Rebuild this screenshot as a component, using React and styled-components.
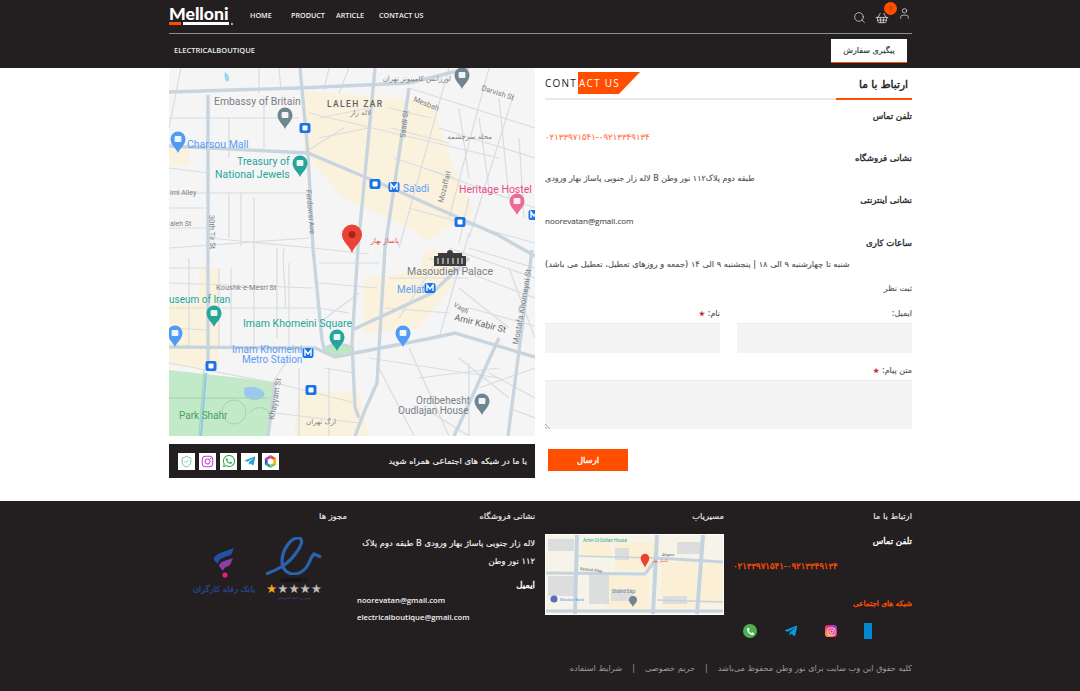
import React from "react";
import styled, { createGlobalStyle } from "styled-components";
import { Search, ShoppingBasket, User, ShieldCheck } from "lucide-react";
import { FaTelegramPlane, FaInstagram, FaWhatsapp, FaPhoneAlt } from "react-icons/fa";

const DARK = "#231f20";
const ORANGE = "#ff4e00";
const FA = `"DejaVu Sans", "Noto Sans", sans-serif`;

const GlobalStyle = createGlobalStyle`
  html, body {
    margin: 0;
    padding: 0;
    background: #fff;
    overflow: hidden;
    font-family: ${FA};
  }
  * { box-sizing: border-box; }
`;

const Page = styled.div`
  width: 1080px;
  height: 691px;
  display: flex;
  flex-direction: column;
`;

const Wrap = styled.div`
  width: 743px;
  margin-left: 169px;
`;

/* header */
const Header = styled.header`
  background: ${DARK};
  height: 68px;
`;

const TopRow = styled.div`
  height: 34px;
  border-bottom: 1px solid #8f8d8d;
  display: flex;
  align-items: center;
`;

const Logo = styled.div`
  width: 81px;
  height: 17px;
  margin-top: -3px;
  position: relative;
  color: #fff;
  font: 900 17.6px/14px "Lato", sans-serif;
`;

const LogoBars = styled.div`
  position: absolute;
  left: 0;
  top: 15px;
  display: flex;
  gap: 2px;
  i {
    display: block;
    height: 3px;
    width: 12px;
    background: ${ORANGE};
  }
  i + i {
    width: 46px;
    background: #fff;
  }
  i + i + i {
    width: 2px;
    height: 2px;
    margin-top: 1px;
    border-radius: 50%;
    background: #ddd;
  }
`;

const Nav = styled.nav`
  display: flex;
  margin-top: -1px;
  font: 600 7.2px/1 "Open Sans", sans-serif;
  color: #f0f0f0;
`;

const NavItem = styled.a`
  width: ${(p) => p.$w}px;
  white-space: nowrap;
`;

const HeaderIcons = styled.div`
  margin-left: auto;
  margin-right: 1px;
  display: flex;
  align-items: center;
  gap: 9px;
  color: #e8e8e8;
  height: 100%;
  padding-top: 2px;
`;

const Basket = styled.div`
  position: relative;
  display: flex;
`;

const Badge = styled.span`
  position: absolute;
  left: 9px;
  top: -9px;
  width: 13px;
  height: 13px;
  border-radius: 50%;
  background: ${ORANGE};
  color: #8a2a00;
  font: 6px/13px "Open Sans", sans-serif;
  text-align: center;
`;

const UserIcon = styled(User)`
  margin-top: -8px;
`;

const BottomRow = styled.div`
  display: flex;
  align-items: center;
  justify-content: space-between;
  height: 33px;
  padding: 0 5px;
`;

const Brand = styled.span`
  font: 600 7.5px/1 "Open Sans", sans-serif;
  color: #e6eef0;
`;

const TrackButton = styled.button`
  width: 76px;
  height: 24px;
  margin-top: 1px;
  border: 0;
  border-bottom: 1px solid ${ORANGE};
  background: #fff;
  color: #333;
  font: 8px/1 ${FA};
  padding: 0;
  -webkit-text-stroke: 0.15px #333;
`;

/* contact section */
const Main = styled(Wrap)`
  display: grid;
  grid-template-columns: 367px 366px;
  column-gap: 10px;
  direction: rtl;
  height: 433px;
`;

const Info = styled.section`
  padding-top: 4px;
`;

const TitleRow = styled.div`
  height: 28px;
  border-bottom: 2px solid #e8e8e8;
  display: flex;
  justify-content: space-between;
`;

const Title = styled.h1`
  margin: 0;
  width: 76px;
  height: 28px;
  border-bottom: 2px solid ${ORANGE};
  padding: 5px 4px 0 0;
  font: 400 10.6px/14px ${FA};
  -webkit-text-stroke: 0.45px #222;
  color: #222;
`;

const TitleEn = styled.div`
  direction: ltr;
  display: flex;
  height: 22px;
  font: 400 10px/22px "Open Sans", sans-serif;
  letter-spacing: 1.25px;
  color: #222;
`;

const TitleStart = styled.span`
  width: 33px;
`;

const TitleAccent = styled.span`
  background: ${ORANGE};
  color: #fff;
  width: 62px;
  padding-left: 1px;
  clip-path: polygon(0 0, 100% 0, 66% 100%, 0 100%);
`;

const Label = styled.h3`
  margin: ${(p) => p.$top ?? 0}px 0 0;
  font: 400 8.6px/14px ${FA};
  -webkit-text-stroke: 0.35px #2b2b2b;
  color: #2b2b2b;
  text-align: right;
`;

const Value = styled.p`
  margin: 7px 0 0;
  font: 400 ${(p) => p.$size || 8}px/14px ${(p) => (p.$latin ? `"Open Sans", ${FA}` : FA)};
  color: ${(p) => p.$color || "#555"};
  -webkit-text-stroke: 0.15px ${(p) => p.$color || "#555"};
  text-align: left;
  white-space: nowrap;
`;

const Small = styled.div`
  margin-top: ${(p) => p.$top}px;
  font: 400 8px/12px ${FA};
  color: #555;
  -webkit-text-stroke: 0.15px #555;
`;

const Star = styled.span`
  color: #e81010;
  font-size: 7px;
`;

const FieldRow = styled.div`
  display: grid;
  grid-template-columns: 175px 175px;
  column-gap: 17px;
  margin-top: 7px;
`;

const Input = styled.div`
  height: 30px;
  background: #f4f4f4;
  border-top: 1px solid #ececec;
  margin-top: 3px;
`;

const TextArea = styled.div`
  height: 49px;
  background: #f4f4f4;
  border-top: 1px solid #ececec;
  margin-top: 3px;
  position: relative;
  &::after {
    content: "";
    position: absolute;
    left: 0;
    bottom: 0;
    width: 6px;
    height: 6px;
    background: repeating-linear-gradient(45deg, transparent 0 1px, #aaa 1px 2px);
    clip-path: polygon(0 0, 100% 100%, 0 100%);
  }
`;

const SendButton = styled.button`
  display: block;
  width: 80px;
  height: 22px;
  margin: 20px 284px 0 0;
  border: 0;
  background: ${ORANGE};
  color: #fff;
  font: 400 8.4px/1 ${FA};
  -webkit-text-stroke: 0.35px #fff;
`;

const MapColumn = styled.section`
  direction: ltr;
`;

const MapFrame = styled.svg`
  display: block;
  width: 366px;
  height: 368px;
`;

const SocialBar = styled.div`
  margin-top: 8px;
  height: 34px;
  background: ${DARK};
  display: flex;
  align-items: center;
  justify-content: space-between;
  padding: 0 8px 0 9px;
`;

const SocialText = styled.span`
  direction: rtl;
  color: #f2f2f2;
  font: 500 8.4px/1 ${FA};
  -webkit-text-stroke: 0.15px #f2f2f2;
`;

const Tiles = styled.div`
  display: flex;
  gap: 4px;
`;

const Tile = styled.span`
  width: 17px;
  height: 17px;
  background: #fff;
  display: flex;
  align-items: center;
  justify-content: center;
  color: ${(p) => p.$color};
`;

/* footer */
const Footer = styled.footer`
  margin-top: auto;
  height: 190px;
  background: ${DARK};
  padding-top: 9px;
`;

const FooterGrid = styled(Wrap)`
  direction: rtl;
  display: grid;
  grid-template-columns: 178px 179px 178px 178px;
  column-gap: 10px;
  height: 140px;
`;

const FooterTitle = styled.h4`
  margin: 0;
  font: 400 8.4px/12px ${FA};
  color: #e8e8e8;
  -webkit-text-stroke: 0.15px #e8e8e8;
  text-align: right;
`;

const FooterLabel = styled.div`
  margin-top: ${(p) => p.$top}px;
  font: 400 ${(p) => p.$size || 8.6}px/12px ${FA};
  color: ${(p) => p.$color || "#fff"};
  -webkit-text-stroke: 0.35px ${(p) => p.$color || "#fff"};
`;

const FooterPhone = styled.div`
  margin: 13px 0 0 -1px;
  font: 400 8.6px/12px ${FA};
  color: ${ORANGE};
  -webkit-text-stroke: 0.3px ${ORANGE};
  text-align: left;
`;

const FooterSocial = styled.div`
  display: flex;
  align-items: center;
  justify-content: space-between;
  padding: 0 40px 0 9px;
  margin-top: 12px;
  height: 18px;
`;

const BrokenIcon = styled.span`
  width: 8px;
  height: 16px;
  background: #0288d1;
`;

const InstaBox = styled.span`
  width: 12px;
  height: 12px;
  border-radius: 3px;
  background: linear-gradient(45deg, #fdb836, #ee2a7b 55%, #7a3bd0);
  color: #fff;
  display: flex;
  align-items: center;
  justify-content: center;
`;

const GreenBubble = styled.span`
  width: 14px;
  height: 14px;
  border-radius: 50%;
  background: #4caf50;
  color: #fff;
  display: flex;
  align-items: center;
  justify-content: center;
`;

const MiniMap = styled.svg`
  display: block;
  direction: ltr;
  width: 179px;
  height: 81px;
  margin-top: 12px;
`;

const AddressText = styled.p`
  margin: 12px 0 0;
  font: 500 8.4px/18px ${FA};
  color: #f4f4f4;
  -webkit-text-stroke: 0.15px #f4f4f4;
  text-align: right;
`;

const MailList = styled.div`
  margin-top: 1px;
`;

const Mail = styled.div`
  font: 600 7.7px/17px "Open Sans", ${FA};
  color: #f0f0f0;
  direction: ltr;
  text-align: left;
`;

const Licences = styled.div`
  display: flex;
  direction: ltr;
  justify-content: space-between;
  padding: 15px 25px 0 22px;
`;

const Enamad = styled.div`
  width: 56px;
  display: flex;
  flex-direction: column;
  align-items: center;
`;

const EnamadName = styled.span`
  margin-top: 2px;
  font: 700 5px/6px "Open Sans", sans-serif;
  color: #0c0c0c;
`;

const Stars = styled.div`
  font: 12.5px/12px "DejaVu Sans", sans-serif;
  color: #bdbdbd;
  white-space: nowrap;
  b {
    color: #f5a81c;
    font-weight: 400;
  }
`;

const EnamadNote = styled.span`
  font: 3px/6px ${FA};
  color: #2d5fae;
`;

const Bank = styled.div`
  width: 66px;
  display: flex;
  flex-direction: column;
  align-items: center;
  gap: 6px;
  padding-top: 11px;
`;

const BankName = styled.span`
  direction: rtl;
  font: 400 8.4px/10px ${FA};
  color: #27468f;
  -webkit-text-stroke: 0.3px #27468f;
  white-space: nowrap;
`;

const Legal = styled(Wrap)`
  direction: rtl;
  margin-top: 11px;
  display: flex;
  gap: 10px;
  font: 400 8.2px/14px ${FA};
  color: #9a9a9a;
`;

const majorRoads = [
  "M0 78 L139 85 L229 123 L329 167 L366 188",
  "M131 0 L139 85 L144 180 L153 272 L156 284",
  "M206 0 L189 180 L183 275 L186 339 L190 350",
  "M240 20 L216 180 L208 315 L196 342 L186 368",
  "M39 27 L39 300",
  "M0 279 L146 280 L166 289 L186 285 L263 270 L286 265 L366 289",
  "M183 262 L263 225 L300 190",
  "M363 182 L339 368",
  "M106 315 L99 368",
  "M0 24 L130 20 L240 15 L300 0",
  "M285 368 L330 270",
];

const minorRoads = [
  "M0 50 L130 50", "M140 45 L330 90", "M280 0 L230 180", "M320 0 L280 150", "M345 25 L300 170",
  "M240 20 L366 60", "M270 60 L366 90", "M255 100 L366 140", "M240 140 L366 175", "M12 0 L0 60",
  "M0 125 L140 125", "M0 160 L40 160", "M0 180 L140 170", "M40 170 L144 180 L200 186", "M60 125 L60 170",
  "M85 130 L85 280", "M108 180 L108 270", "M0 215 L144 220", "M0 240 L148 240", "M20 190 L20 280",
  "M150 195 L210 195", "M150 215 L208 220", "M150 240 L180 245", "M220 210 L300 210", "M230 250 L270 190",
  "M260 190 L366 230", "M280 180 L366 210", "M290 220 L340 260", "M300 165 L270 270", "M340 200 L366 270",
  "M200 290 L330 310", "M210 300 L245 368", "M240 280 L280 368", "M0 295 L106 315 L186 335", "M106 345 L190 355",
  "M120 290 L100 320", "M290 290 L340 330", "M310 320 L366 300", "M340 340 L366 350", "M130 300 L130 368",
  "M160 300 L160 368", "M60 90 L60 50", "M95 30 L95 80", "M170 25 L180 0", "M175 60 L135 85",
  "M0 100 L40 105", "M0 140 L40 140", "M72 125 L72 178", "M90 0 L90 25", "M110 0 L112 22", "M160 0 L155 22",
  "M150 50 L200 40", "M150 70 L200 60", "M220 40 L262 50", "M222 60 L280 75", "M225 90 L285 110", "M290 40 L300 110",
  "M310 50 L320 120", "M330 30 L340 130", "M350 70 L355 150", "M300 130 L290 175", "M0 200 L39 200", "M0 260 L39 262",
  "M50 200 L50 280", "M62 200 L62 280", "M120 195 L120 280", "M155 300 L186 305", "M216 240 L280 245", "M300 180 L366 200",
  "M300 240 L366 258", "M190 225 L150 255", "M300 295 L300 368", "M320 305 L366 330", "M250 310 L330 300", "M255 340 L300 368",
  "M115 180 C112 200 118 215 116 240",
];

const Pin = ({ x, y, color }) => (
  <g transform={`translate(${x} ${y})`}>
    <path d="M0 0 C-2 -5 -7.5 -8 -7.5 -14 A7.5 7.5 0 1 1 7.5 -14 C7.5 -8 2 -5 0 0 Z" fill={color} />
    <rect x="-3.4" y="-17" width="6.8" height="6" rx="1" fill="#fff" opacity="0.9" />
  </g>
);

const TransitBox = ({ x, y, metro }) => (
  <g transform={`translate(${x} ${y})`}>
    <rect x="-5.5" y="-5" width="11" height="10" rx="2" fill="#1a73e8" />
    {metro ? (
      <path d="M-3 3 V-3 L0 1 L3 -3 V3" fill="none" stroke="#fff" strokeWidth="1.4" />
    ) : (
      <rect x="-2.5" y="-2.5" width="5" height="5" rx="1" fill="#fff" />
    )}
  </g>
);

const MapText = ({ x, y, size = 10.5, fill = "#7a7f85", rotate, children, spacing, weight }) => (
  <text
    x={x}
    y={y}
    fontFamily="Roboto, sans-serif"
    fontSize={size}
    fontWeight={weight || 400}
    fill={fill}
    letterSpacing={spacing}
    transform={rotate ? `rotate(${rotate} ${x} ${y})` : undefined}
  >
    {children}
  </text>
);

const ContactMap = () => (
  <MapFrame viewBox="0 0 366 368">
    <rect width="366" height="368" fill="#f5f5f5" />
    <g fill="#fbf2de">
      <path d="M136 23 L262 33 L285 100 L305 145 L258 172 L240 160 L175 130 L135 85 Z" />
      <path d="M0 80 L20 80 L20 97 L0 97 Z" />
      <path d="M30 200 L50 200 L50 300 L0 298 L0 235 L30 235 Z" />
      <path d="M195 210 L235 205 L270 195 L285 215 L250 260 L195 265 Z" />
      <path d="M130 322 L190 325 L200 368 L125 368 Z" />
      <path d="M255 182 L300 185 L280 215 L250 205 Z" />
    </g>
    <path d="M0 302 L106 314 L99 368 L0 368 Z" fill="#c2eac8" />
    <path d="M75 320 C85 316 98 322 95 328 C88 335 78 332 75 326 Z" fill="#9cc8f0" />
    <g fill="none" stroke="#9fd4ac" strokeWidth="1">
      <circle cx="65" cy="344" r="12" />
      <path d="M0 330 H100 M35 302 L30 368 M80 345 C88 336 100 340 100 346" />
    </g>
    <path d="M37 305 L32 368" stroke="#8fc6ee" strokeWidth="2" fill="none" />
    <g fill="none" stroke="#d8dde1" strokeWidth="1.2">
      {minorRoads.map((d) => (
        <path key={d} d={d} />
      ))}
    </g>
    <g fill="none" stroke="#c9d5de" strokeWidth="3.4">
      {majorRoads.map((d) => (
        <path key={d} d={d} />
      ))}
    </g>
    <ellipse cx="170" cy="282" rx="14" ry="6" fill="#bde6c4" stroke="#c9d5de" strokeWidth="2" />
    <path d="M56 4 C54 10 58 14 58 14 C62 12 60 6 56 4 Z" fill="#9cd7f2" />

    <MapText x="45" y="37" size={10.4}>Embassy of Britain</MapText>
    <MapText x="158" y="39" size={8.5} fill="#5f6368" weight={500} spacing={1.4}>LALEH ZAR</MapText>
    <MapText x="18" y="80" size={10.5} fill="#5b9cf5">Charsou Mall</MapText>
    <MapText x="68" y="97" size={10.5} fill="#26a69a">Treasury of</MapText>
    <MapText x="46" y="110" size={10.5} fill="#26a69a">National Jewels</MapText>
    <MapText x="234" y="124" size={10} fill="#5b9cf5">Sa'adi</MapText>
    <MapText x="290" y="125" size={10.5} fill="#ea4c89">Heritage Hostel</MapText>
    <MapText x="244" y="33" size={7.5} rotate={22}>Mesbah</MapText>
    <MapText x="312" y="22" size={7.5} rotate={18}>Darvish St</MapText>
    <MapText x="236" y="70" size={7.5} rotate={-83}>Saadi St</MapText>
    <MapText x="40" y="147" size={7.5} rotate={88}>30th Tir St</MapText>
    <MapText x="137" y="122" size={7.5} rotate={85}>Ferdowsi Ave</MapText>
    <MapText x="274" y="135" size={7.5} rotate={-76}>Mozaffari</MapText>
    <MapText x="1" y="127" size={7}>imi Alley</MapText>
    <MapText x="1" y="158" size={7}>aleh St</MapText>
    <MapText x="47" y="222" size={7.5}>Koushk-e-Mesri St</MapText>
    <MapText x="0" y="235" size={10} fill="#26a69a">useum of Iran</MapText>
    <MapText x="74" y="259" size={10.5} fill="#26a69a">Imam Khomeini Square</MapText>
    <MapText x="63" y="285" size={10} fill="#5b9cf5">Imam Khomeini</MapText>
    <MapText x="73" y="295" size={10} fill="#5b9cf5">Metro Station</MapText>
    <MapText x="238" y="207" size={10.5}>Masoudieh Palace</MapText>
    <MapText x="228" y="225" size={10} fill="#5b9cf5">Mellat</MapText>
    <MapText x="285" y="252" size={9} rotate={14} fill="#5f6368">Amir Kabir St</MapText>
    <MapText x="284" y="238" size={7} rotate={30}>Vaqfi</MapText>
    <MapText x="349" y="277" size={8} rotate={-80}>Mostafa Khomeyni St</MapText>
    <MapText x="247" y="336" size={10}>Ordibehesht</MapText>
    <MapText x="229" y="346" size={10}>Oudlajan House</MapText>
    <MapText x="10" y="351" size={10} fill="#4d9f63">Park Shahr</MapText>
    <MapText x="105" y="352" size={8} rotate={-80}>Khayyam St</MapText>
    <g fontFamily="DejaVu Sans, sans-serif" fontSize="7" fill="#7a7f85" direction="rtl">
      <text x="282" y="13">اورژانس کامپیوتر تهران</text>
      <text x="202" y="47">لاله زار</text>
      <text x="323" y="71">محله سرچشمه</text>
      <text x="167" y="356">ارگ تهران</text>
    </g>
    <text x="230" y="175" fontFamily="DejaVu Sans, sans-serif" fontSize="7" fill="#e5483b" direction="rtl">پاساژ بهار</text>

    <Pin x={293} y={21} color="#6f8590" />
    <Pin x={116} y={61} color="#6f8590" />
    <Pin x={9} y={85} color="#4f9cf5" />
    <Pin x={131} y={109} color="#26a69a" />
    <Pin x={348} y={147} color="#ec6a96" />
    <Pin x={45} y={259} color="#26a69a" />
    <Pin x={168} y={283} color="#26a69a" />
    <Pin x={234} y={279} color="#4f9cf5" />
    <Pin x={6} y={279} color="#4f9cf5" />
    <Pin x={313} y={347} color="#6f8590" />
    <g transform="translate(183 185)">
      <path d="M0 0 C-2 -7 -10 -11 -10 -18.5 A10 10 0 1 1 10 -18.5 C10 -11 2 -7 0 0 Z" fill="#ea4335" />
      <circle cy="-18.5" r="3.5" fill="#a52714" />
    </g>
    <TransitBox x={136} y={60} />
    <TransitBox x={206} y={116} />
    <TransitBox x={225} y={119} metro />
    <TransitBox x={291} y={154} />
    <TransitBox x={365} y={147} metro />
    <TransitBox x={261} y={220} metro />
    <TransitBox x={139} y={285} metro />
    <TransitBox x={42} y={298} />
    <TransitBox x={142} y={322} />
    <g transform="translate(265 183)" fill="#3c3c3c">
      <rect x="0" y="5" width="32" height="10" />
      <rect x="4" y="2" width="24" height="3" />
      <circle cx="16" cy="2" r="3" />
      <path d="M4 7 V13 M9 7 V13 M14 7 V13 M19 7 V13 M24 7 V13 M28 7 V13" stroke="#f4f5f6" strokeWidth="1" />
    </g>
  </MapFrame>
);

const FooterMap = () => (
  <MiniMap viewBox="0 0 179 81">
    <rect width="179" height="81" fill="#fff" />
    <rect x="1" y="1" width="177" height="79" fill="#f6f3e8" />
    <g fill="#fbf0d6">
      <rect x="70" y="8" width="40" height="28" />
      <rect x="116" y="28" width="36" height="46" />
      <rect x="60" y="42" width="44" height="34" />
      <rect x="156" y="30" width="22" height="40" />
      <rect x="36" y="8" width="30" height="14" />
    </g>
    <g fill="#dcdedd">
      <rect x="3" y="42" width="26" height="20" />
      <rect x="44" y="40" width="20" height="30" />
      <rect x="66" y="55" width="22" height="12" />
      <rect x="3" y="5" width="26" height="12" />
      <rect x="132" y="8" width="26" height="12" />
      <rect x="118" y="62" width="24" height="8" />
      <rect x="70" y="14" width="14" height="12" />
    </g>
    <g stroke="#c4d3dd" fill="none">
      <path d="M32 1 L30 80 M112 1 L108 80 M158 1 L152 80" strokeWidth="4" />
      <path d="M1 39 L100 40 L112 24 L178 28 M1 77 L178 77" strokeWidth="3" />
      <path d="M112 66 L178 68 M30 22 L112 24" strokeWidth="1.6" />
    </g>
    <text x="38" y="8" fontSize="4.5" fontFamily="Roboto, sans-serif" fill="#26a69a">Amin Ol-Soltan House</text>
    <text x="35" y="36" fontSize="4" fontFamily="Roboto, sans-serif" fill="#5f6368" transform="rotate(6 35 36)">Barbod Alley</text>
    <text x="117" y="22" fontSize="4" fontFamily="Roboto, sans-serif" fill="#5f6368">Aligour</text>
    <text x="67" y="59" fontSize="4.5" fontFamily="Roboto, sans-serif" fill="#7a7f85">Shahid Sagi</text>
    <text x="15" y="67" fontSize="4" fontFamily="Roboto, sans-serif" fill="#5b9cf5">Maskan Bank</text>
    <circle cx="9" cy="65" r="3.5" fill="#5c6bc0" />
    <path d="M84 66 a4 4 0 1 1 8 0 c0 3 -3 4 -4 7 c-1 -3 -4 -4 -4 -7 z" fill="#6f8590" />
    <path d="M100 34 C99 30 95.7 28 95.7 24 A4.3 4.3 0 1 1 104.3 24 C104.3 28 101 30 100 34 Z" fill="#ea4335" />
    <text x="123" y="28" fontSize="4" fontFamily="DejaVu Sans, sans-serif" fill="#e5483b" direction="rtl">پاساژ بهار</text>
  </MiniMap>
);

const EnamadLogo = () => (
  <svg width="56" height="38" viewBox="0 0 56 38">
    <path
      d="M0 37 C10 33 22 28 30 16 C36 8 38 1 32 1 C24 1 16 14 16 24 C16 33 22 37 28 37 C36 37 42 30 45 21 L48 17 L55 20"
      fill="none"
      stroke="#2a62b0"
      strokeWidth="3.2"
    />
  </svg>
);

const BankLogo = () => (
  <svg width="24" height="30" viewBox="0 0 24 30">
    <path d="M2 12 C2 6 8 5 22 0 L19 7 C12 9 7 10 6 16 Z" fill="#2451a6" />
    <path d="M7 18 C8 13 14 13 21 10 L18 17 C15 19 12 19 11 23 Z" fill="#8a3fa8" />
    <circle cx="13" cy="27" r="2.6" fill="#e61e8c" />
  </svg>
);

export default function App() {
  return (
    <>
      <GlobalStyle />
      <Page>
        <Header>
          <Wrap>
            <TopRow>
              <Logo>
                Melloni
                <LogoBars>
                  <i />
                  <i />
                  <i />
                </LogoBars>
              </Logo>
              <Nav>
                <NavItem $w={41}>HOME</NavItem>
                <NavItem $w={45}>PRODUCT</NavItem>
                <NavItem $w={43}>ARTICLE</NavItem>
                <NavItem $w={50}>CONTACT US</NavItem>
              </Nav>
              <HeaderIcons>
                <Search size={13} strokeWidth={1.3} />
                <Basket>
                  <ShoppingBasket size={14} strokeWidth={1.3} />
                  <Badge>0</Badge>
                </Basket>
                <UserIcon size={13} strokeWidth={1.3} />
              </HeaderIcons>
            </TopRow>
            <BottomRow>
              <Brand>ELECTRICALBOUTIQUE</Brand>
              <TrackButton dir="rtl">پیگیری سفارش</TrackButton>
            </BottomRow>
          </Wrap>
        </Header>

        <Main>
          <Info>
            <TitleRow>
              <Title>ارتباط با ما</Title>
              <TitleEn>
                <TitleStart>CONT</TitleStart>
                <TitleAccent>ACT US</TitleAccent>
              </TitleEn>
            </TitleRow>
            <Label $top={9}>تلفن تماس</Label>
            <Value $color="#ff7a50" $size={8.6}>۰۲۱۳۳۹۷۱۵۴۱-۰۹۲۱۳۳۴۹۱۳۴</Value>
            <Label $top={7}>نشانی فروشگاه</Label>
            <Value>طبقه دوم پلاک۱۱۲ نور وطن B لاله زار جنوبی پاساژ بهار ورودی</Value>
            <Label $top={7}>نشانی اینترنتی</Label>
            <Value $latin>noorevatan@gmail.com</Value>
            <Label $top={8}>ساعات کاری</Label>
            <Value $size={8.25}>شنبه تا چهارشنبه ۹ الی ۱۸ | پنجشنبه ۹ الی ۱۴ (جمعه و روزهای تعطیل، تعطیل می باشد)</Value>
            <Small $top={12}>ثبت نظر</Small>
            <FieldRow>
              <div>
                <Small $top={6}>ایمیل:</Small>
                <Input />
              </div>
              <div>
                <Small $top={6}>
                  نام: <Star>★</Star>
                </Small>
                <Input />
              </div>
            </FieldRow>
            <Small $top={12}>
              متن پیام: <Star>★</Star>
            </Small>
            <TextArea />
            <SendButton>ارسال</SendButton>
          </Info>

          <MapColumn>
            <ContactMap />
            <SocialBar>
              <Tiles>
                <Tile $color="#5fb0a5">
                  <ShieldCheck size={13} strokeWidth={1.5} />
                </Tile>
                <Tile $color="#c13fd0">
                  <FaInstagram size={13} />
                </Tile>
                <Tile $color="#2eae4a">
                  <FaWhatsapp size={14} />
                </Tile>
                <Tile $color="#2a9fd8">
                  <FaTelegramPlane size={12} />
                </Tile>
                <Tile>
                  <svg width="15" height="15" viewBox="0 0 16 16">
                    <path d="M8 1 L14 4.5 L8 8 Z" fill="#f44336" />
                    <path d="M14 4.5 V11.5 L8 8 Z" fill="#ffb300" />
                    <path d="M14 11.5 L8 15 L8 8 Z" fill="#8bc34a" />
                    <path d="M8 15 L2 11.5 L8 8 Z" fill="#26a69a" />
                    <path d="M2 11.5 V4.5 L8 8 Z" fill="#3f51b5" />
                    <path d="M2 4.5 L8 1 L8 8 Z" fill="#ab47bc" />
                    <path d="M8 4.5 L11 6.2 V9.8 L8 11.5 L5 9.8 V6.2 Z" fill="#fff" />
                  </svg>
                </Tile>
              </Tiles>
              <SocialText>با ما در شبکه های اجتماعی همراه شوید</SocialText>
            </SocialBar>
          </MapColumn>
        </Main>

        <Footer>
          <FooterGrid>
            <div>
              <FooterTitle>ارتباط با ما</FooterTitle>
              <FooterLabel $top={13}>تلفن تماس</FooterLabel>
              <FooterPhone>۰۲۱۳۳۹۷۱۵۴۱-۰۹۲۱۳۳۴۹۱۳۴</FooterPhone>
              <FooterLabel $top={26} $color={ORANGE} $size={7.4}>
                شبکه های اجتماعی
              </FooterLabel>
              <FooterSocial>
                <BrokenIcon />
                <InstaBox>
                  <FaInstagram size={9} />
                </InstaBox>
                <FaTelegramPlane size={14} color="#039be5" />
                <GreenBubble>
                  <FaPhoneAlt size={7} />
                </GreenBubble>
              </FooterSocial>
            </div>
            <div>
              <FooterTitle>مسیریاب</FooterTitle>
              <FooterMap />
            </div>
            <div>
              <FooterTitle>نشانی فروشگاه</FooterTitle>
              <AddressText>لاله زار جنوبی پاساژ بهار ورودی B طبقه دوم پلاک ۱۱۲ نور وطن</AddressText>
              <FooterLabel $top={9}>ایمیل</FooterLabel>
              <MailList>
                <Mail>noorevatan@gmail.com</Mail>
                <Mail>electricalboutique@gmail.com</Mail>
              </MailList>
            </div>
            <div>
              <FooterTitle>مجوز ها</FooterTitle>
              <Licences>
                <Bank>
                  <BankLogo />
                  <BankName>بانک رفاه کارگران</BankName>
                </Bank>
                <Enamad>
                  <EnamadLogo />
                  <EnamadName>eNAMAD.ir</EnamadName>
                  <Stars>
                    <b>★</b>★★★★
                  </Stars>
                  <EnamadNote>مهم‌ترین اعتماد الکترونیکی</EnamadNote>
                </Enamad>
              </Licences>
            </div>
          </FooterGrid>
          <Legal>
            <span>کلیه حقوق این وب سایت برای نور وطن محفوظ می‌باشد</span>
            <span>|</span>
            <span>حریم خصوصی</span>
            <span>|</span>
            <span>شرایط استفاده</span>
          </Legal>
        </Footer>
      </Page>
    </>
  );
}
